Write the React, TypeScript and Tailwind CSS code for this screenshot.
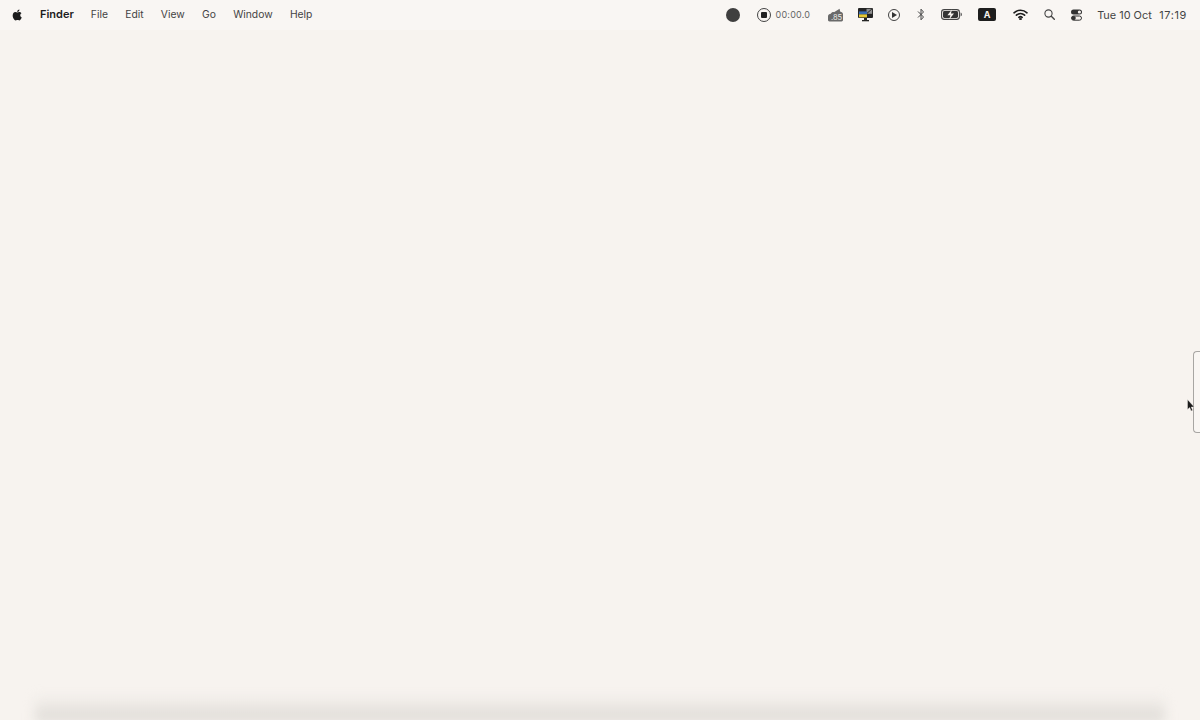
import React from "react";

const menus = ["File", "Edit", "View", "Go", "Window", "Help"];

function Apple() {
  return (
    <svg width="13" height="14" viewBox="0 0 24 24" fill="#1c1c1c">
      <path d="M17.05 12.54c-.03-2.6 2.12-3.85 2.22-3.91-1.21-1.77-3.09-2.01-3.76-2.04-1.6-.16-3.12.94-3.93.94-.81 0-2.06-.92-3.39-.89-1.74.03-3.35 1.01-4.25 2.57-1.81 3.14-.46 7.8 1.3 10.35.86 1.25 1.89 2.65 3.24 2.6 1.3-.05 1.79-.84 3.36-.84 1.57 0 2.01.84 3.39.81 1.4-.02 2.28-1.27 3.14-2.53.99-1.45 1.4-2.85 1.42-2.93-.03-.01-2.72-1.04-2.74-4.13zM14.47 4.9c.72-.87 1.2-2.08 1.07-3.28-1.03.04-2.28.69-3.02 1.55-.66.77-1.24 2-1.09 3.18 1.15.09 2.32-.58 3.04-1.45z" />
    </svg>
  );
}

function Cloud() {
  return (
    <svg width="15" height="14" viewBox="0 0 15 14">
      <path d="M1.5 13.5C.5 13.5 0 12.8 0 11.8V8.6C0 6.8 1.3 5.8 2.8 5.8 3.4 4.5 4.8 3.9 6 4.2L11.6.8l.5 2.6 1.7.9c.8.5 1.2 1.1 1.2 2v5.5c0 1-.6 1.7-1.5 1.7z" fill="#6a6a6a" />
      <text x="8.6" y="12" fontSize="7.5" fill="#eceae7" fontFamily="Inter, sans-serif" textAnchor="middle">.85</text>
    </svg>
  );
}

function Monitor() {
  return (
    <svg width="15" height="15" viewBox="0 0 15 15">
      <rect x="0" y="1" width="15" height="10" rx="1" fill="#242424" />
      <rect x="8.5" y="1.8" width="5.6" height="5" fill="#8f8f8f" />
      <path d="M8.5 6.8 14 1.8" stroke="#242424" strokeWidth="1" />
      <rect x="1" y="4.4" width="8" height="3" fill="#3b6db5" />
      <rect x="1" y="7.4" width="8" height="3" fill="#e6c835" />
      <rect x="6" y="11" width="3" height="2" fill="#242424" />
      <rect x="4" y="13" width="7" height="1.3" fill="#242424" />
    </svg>
  );
}

function Battery() {
  return (
    <svg width="21" height="11" viewBox="0 0 21 11">
      <rect x="0.6" y="0.6" width="17.8" height="9.8" rx="2.6" fill="none" stroke="#444" strokeWidth="1.1" />
      <rect x="2" y="2" width="15" height="7" rx="1.4" fill="#333" />
      <path d="M19.6 3.6c.8.3 1.2 1 1.2 1.9s-.4 1.6-1.2 1.9z" fill="#444" />
      <path d="M11 .6 6.4 6.2h3L8.2 10.4l4.8-5.8H9.9z" fill="#f7f3ef" />
    </svg>
  );
}

function Wifi() {
  return (
    <svg width="15" height="11" viewBox="0 0 15 11" fill="none" stroke="#1c1c1c" strokeWidth="1.6" strokeLinecap="round">
      <path d="M1 3.8C4.7.4 10.3.4 14 3.8" />
      <path d="M3.4 6.2c2.4-2.1 5.8-2.1 8.2 0" />
      <path d="M5.8 8.3c1-.8 2.4-.8 3.4 0" />
      <circle cx="7.5" cy="9.9" r="0.5" fill="#1c1c1c" />
    </svg>
  );
}

function Search() {
  return (
    <svg width="11" height="11" viewBox="0 0 11 11" fill="none" stroke="#444" strokeWidth="1.1" strokeLinecap="round">
      <circle cx="4.5" cy="4.5" r="3.6" />
      <path d="M7.3 7.3 10.3 10.3" strokeWidth="1.4" />
    </svg>
  );
}

function Controls() {
  return (
    <svg width="11" height="12" viewBox="0 0 11 12">
      <rect x="0" y="0.5" width="11" height="5" rx="2.5" fill="#333" />
      <circle cx="8.4" cy="3" r="1.6" fill="#f7f3ef" />
      <rect x="0.5" y="7" width="10" height="4.2" rx="2.1" fill="#f7f3ef" stroke="#333" />
      <circle cx="2.7" cy="9.1" r="2.1" fill="#333" />
    </svg>
  );
}

export default function App() {
  return (
    <div className="relative h-[720px] w-[1200px] overflow-hidden bg-[#f7f3ef] font-['Inter','Liberation_Sans',sans-serif]">
      <header className="flex h-[30px] items-center bg-[#f9f6f3] pl-[11px] pr-[13px] text-[10.3px] text-[#444]">
        <Apple />
        <span className="mb-px ml-[16px] text-[11px] font-semibold text-[#1c1c1c]">Finder</span>
        <nav className="mb-px ml-[17px] flex gap-[17.3px]">
          {menus.map((m) => (
            <span key={m}>{m}</span>
          ))}
        </nav>
        <div className="ml-auto flex items-center">
          <span className="h-[14px] w-[14px] rounded-full bg-[#3f3f3f]" />
          <span className="ml-[17px] flex h-[14px] w-[14px] items-center justify-center rounded-full border border-[#444]">
            <span className="h-[6px] w-[6px] rounded-[1px] bg-[#222]" />
          </span>
          <span className="ml-[5px] text-[9px] tracking-[0.2px] text-[#666]">00:00.0</span>
          <span className="ml-[18px] flex"><Cloud /></span>
          <span className="ml-[15px] flex"><Monitor /></span>
          <span className="ml-[15px] flex h-[12px] w-[12px] items-center justify-center rounded-full border border-[#444]">
            <span className="ml-[1px] h-0 w-0 border-y-[3px] border-l-[5px] border-y-transparent border-l-[#333]" />
          </span>
          <svg className="ml-[17px]" width="8" height="13" viewBox="0 0 8 13" fill="none" stroke="#444" strokeWidth="1">
            <path d="M1 3.5 6.5 9 4 11.8V1.2L6.5 4 1 9.5" />
          </svg>
          <span className="ml-[16px] flex"><Battery /></span>
          <span className="ml-[16px] flex h-[13px] w-[18px] items-center justify-center rounded-[2px] bg-[#1e1e1e] text-[9px] font-bold text-[#f7f3ef]">A</span>
          <span className="ml-[17px] flex"><Wifi /></span>
          <span className="ml-[16px] flex"><Search /></span>
          <span className="ml-[16px] flex"><Controls /></span>
          <span className="ml-[15px] flex gap-[7.5px] text-[10.9px]">
            <span>Tue 10 Oct</span>
            <span className="tracking-[0.65px]">17:19</span>
          </span>
        </div>
      </header>

      <div className="absolute right-0 top-[351px] h-[82px] w-[7px] rounded-l-[4px] border-y-[1.5px] border-l-[1.5px] border-[#a8a6a3] bg-[#f9f6f3]" />
      <svg className="absolute left-[1187px] top-[399px]" width="8" height="14" viewBox="0 0 8 14">
        <path d="M.5.5v10l2.2-2 1.4 3.4 1.5-.6-1.4-3.3h3z" fill="#1a1a1a" stroke="#f7f3ef" strokeWidth="0.4" />
      </svg>

      <div className="absolute -bottom-[2px] left-[35px] right-[35px] h-[28px] bg-gradient-to-b from-transparent to-[#dcd9d4] blur-[6px]" />
    </div>
  );
}
